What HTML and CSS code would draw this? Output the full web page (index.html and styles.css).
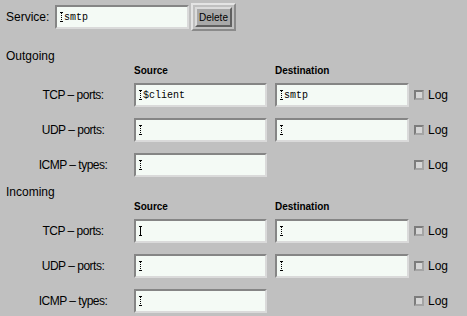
FILE: index.html
```html
<!doctype html>
<html lang="en">
<head>
    <meta charset="UTF-8">
    <title>Service rule</title>
    <link rel="stylesheet" href="styles.css">
</head>
<body>

<!-- Service name -->
<div class="service-bar">
    <span class="label">Service:</span>
    <div class="entry service-entry"><span class="caret"></span>smtp</div>
    <div class="default-ring"><button class="btn">Delete</button></div>
</div>

<!-- Outgoing -->
<div class="section">
    <div class="section-title">Outgoing</div>
    <div class="grid">
        <div></div>
        <div class="col-head">Source</div>
        <div class="col-head">Destination</div>
        <div></div>

        <div class="row-label">TCP &ndash; ports:</div>
        <div class="entry"><span class="caret"></span>$client</div>
        <div class="entry"><span class="caret"></span>smtp</div>
        <label class="log"><span class="check"></span>Log</label>

        <div class="row-label">UDP &ndash; ports:</div>
        <div class="entry"><span class="caret"></span></div>
        <div class="entry"><span class="caret"></span></div>
        <label class="log"><span class="check"></span>Log</label>

        <div class="row-label">ICMP &ndash; types:</div>
        <div class="entry"><span class="caret"></span></div>
        <div></div>
        <label class="log"><span class="check"></span>Log</label>
    </div>
</div>

<!-- Incoming -->
<div class="section">
    <div class="section-title">Incoming</div>
    <div class="grid">
        <div></div>
        <div class="col-head">Source</div>
        <div class="col-head">Destination</div>
        <div></div>

        <div class="row-label">TCP &ndash; ports:</div>
        <div class="entry"><span class="caret focus"></span></div>
        <div class="entry"><span class="caret"></span></div>
        <label class="log"><span class="check"></span>Log</label>

        <div class="row-label">UDP &ndash; ports:</div>
        <div class="entry"><span class="caret"></span></div>
        <div class="entry"><span class="caret"></span></div>
        <label class="log"><span class="check"></span>Log</label>

        <div class="row-label">ICMP &ndash; types:</div>
        <div class="entry"><span class="caret"></span></div>
        <div></div>
        <label class="log"><span class="check"></span>Log</label>
    </div>
</div>

</body>
</html>
```

FILE: styles.css
```css
body {
    margin: 0;
    background-color: #c0c0c0;
    font-family: "Liberation Sans", Arial, sans-serif;
    font-size: 12px;
    color: #000;
    width: 467px;
    height: 316px;
    overflow: hidden;
}
.service-bar {
    display: flex;
    align-items: center;
    height: 28px;
    padding: 3px 0 0 6px;
}
.label {
    width: 49px;
}
.entry {
    box-sizing: border-box;
    height: 24px;
    display: flex;
    align-items: center;
    padding-left: 3px;
    background-color: #f4faf5;
    border: 2px solid;
    border-color: #858585 #dadada #dadada #858585;
    font-family: "Liberation Mono", "Courier New", monospace;
    font-size: 10px;
}
.service-entry {
    width: 134px;
}
.caret {
    display: inline-block;
    box-sizing: border-box;
    width: 3px;
    height: 10px;
    margin-right: 1px;
    border-top: 1px solid #000;
    border-bottom: 1px solid #000;
    background: linear-gradient(#000 50%, transparent 50%) 1px 0 / 1px 2px repeat-y;
}
.caret.focus {
    background: linear-gradient(#000, #000) 1px 0 / 1px 100% no-repeat;
}
.default-ring {
    box-sizing: border-box;
    width: 45px;
    height: 28px;
    margin-left: 2px;
    padding: 2px;
    border: 2px solid;
    border-color: #e4e4e4 #8a8a8a #8a8a8a #e4e4e4;
}
.btn {
    box-sizing: border-box;
    width: 37px;
    height: 20px;
    padding: 0;
    background-color: #a9a9a9;
    border: 2px solid;
    border-color: #dcdcdc #606060 #606060 #dcdcdc;
    font-family: "Liberation Sans", Arial, sans-serif;
    font-size: 10px;
    color: #000;
}
.section {
    padding-top: 18px;
}
.section + .section {
    padding-top: 8px;
}
.section-title {
    height: 15px;
    line-height: 15px;
    padding-left: 6px;
}
.grid {
    display: grid;
    grid-template-columns: 126px 133px 134px auto;
    column-gap: 8px;
    row-gap: 11px;
}
.grid > :nth-child(4n) {
    margin-left: -3px;
}
.col-head {
    height: 14px;
    line-height: 14px;
    font-size: 10px;
    font-weight: bold;
    margin-bottom: -6px;
}
.row-label {
    padding-left: 20px;
    text-align: center;
    line-height: 24px;
    letter-spacing: -0.5px;
}
.log {
    display: flex;
    align-items: center;
    gap: 4px;
}
.check {
    box-sizing: border-box;
    width: 10px;
    height: 10px;
    border: 2px solid;
    border-color: #7c7c7c #a4a4a4 #a4a4a4 #7c7c7c;
    background-color: #d6d6d6;
}
```
